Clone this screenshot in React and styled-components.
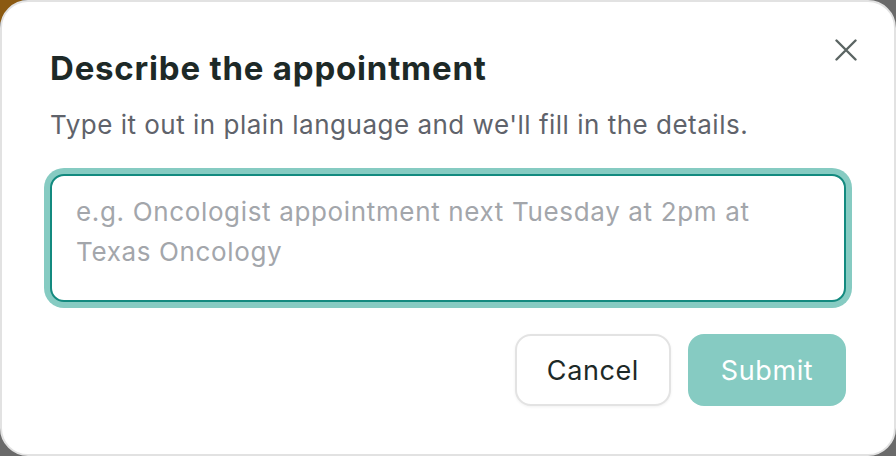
import React from "react";
import styled, { createGlobalStyle } from "styled-components";

const GlobalStyle = createGlobalStyle`
  * {
    box-sizing: border-box;
  }
  html,
  body {
    margin: 0;
    padding: 0;
  }
  body {
    width: 896px;
    height: 456px;
    overflow: hidden;
    font-family: Inter, "Noto Sans", sans-serif;
    background: radial-gradient(circle at 0 0, #8b5a12 0, #8b5a12 22px, #6a6a6a 23px);
  }
`;

const Dialog = styled.div`
  position: relative;
  display: flex;
  flex-direction: column;
  width: 896px;
  height: 456px;
  padding: 48px;
  background-color: #fff;
  border: 2px solid #e2e2e2;
  border-radius: 28px;
`;

const CloseButton = styled.button`
  position: absolute;
  top: 34px;
  right: 34px;
  display: flex;
  align-items: center;
  justify-content: center;
  width: 28px;
  height: 28px;
  padding: 0;
  border: none;
  background: none;
  color: #5b6563;
  cursor: pointer;
`;

const Title = styled.h2`
  margin: 0;
  font-size: 33px;
  line-height: 36px;
  font-weight: 700;
  letter-spacing: 0.8px;
  color: #1d2927;
`;

const Subtitle = styled.p`
  margin: 21px 0 0;
  font-size: 26px;
  line-height: 36px;
  letter-spacing: 0.5px;
  color: #5f636b;
`;

const Input = styled.textarea`
  display: block;
  width: 100%;
  height: 128px;
  margin-top: 31px;
  padding: 16px 24px;
  font-family: inherit;
  font-size: 26px;
  line-height: 40px;
  letter-spacing: 0.65px;
  color: #1d2927;
  border: 2px solid #138a7f;
  border-radius: 14px;
  box-shadow: 0 0 0 6px #86cbc2;
  outline: none;
  resize: none;
  &::placeholder {
    color: #a3a6ab;
  }
`;

const Actions = styled.div`
  display: flex;
  justify-content: flex-end;
  gap: 17px;
  margin-top: 32px;
`;

const Button = styled.button`
  height: 72px;
  min-width: ${(p) => (p.primary ? "158px" : "156px")};
  padding: 0 30px;
  font-family: inherit;
  font-size: 27px;
  font-weight: 400;
  letter-spacing: 0.6px;
  border-radius: 16px;
  border: ${(p) => (p.primary ? "none" : "2px solid #e3e3e3")};
  background-color: ${(p) => (p.primary ? "#86cbc2" : "#fff")};
  color: ${(p) => (p.primary ? "#fff" : "#1d2927")};
  box-shadow: ${(p) => (p.primary ? "none" : "0 1px 3px rgba(0, 0, 0, 0.06)")};
  cursor: ${(p) => (p.disabled ? "default" : "pointer")};
`;

const App = () => (
  <>
    <GlobalStyle />
    <Dialog>
      <CloseButton aria-label="Close">
        <svg width="22" height="22" viewBox="0 0 22 22" fill="none">
          <path
            d="M1.5 1.5L20.5 20.5M20.5 1.5L1.5 20.5"
            stroke="currentColor"
            strokeWidth="2.4"
            strokeLinecap="round"
          />
        </svg>
      </CloseButton>
      <Title>Describe the appointment</Title>
      <Subtitle>
        Type it out in plain language and we'll fill in the details.
      </Subtitle>
      <Input placeholder="e.g. Oncologist appointment next Tuesday at 2pm at Texas Oncology" />
      <Actions>
        <Button>Cancel</Button>
        <Button primary disabled>
          Submit
        </Button>
      </Actions>
    </Dialog>
  </>
);

export default App;
